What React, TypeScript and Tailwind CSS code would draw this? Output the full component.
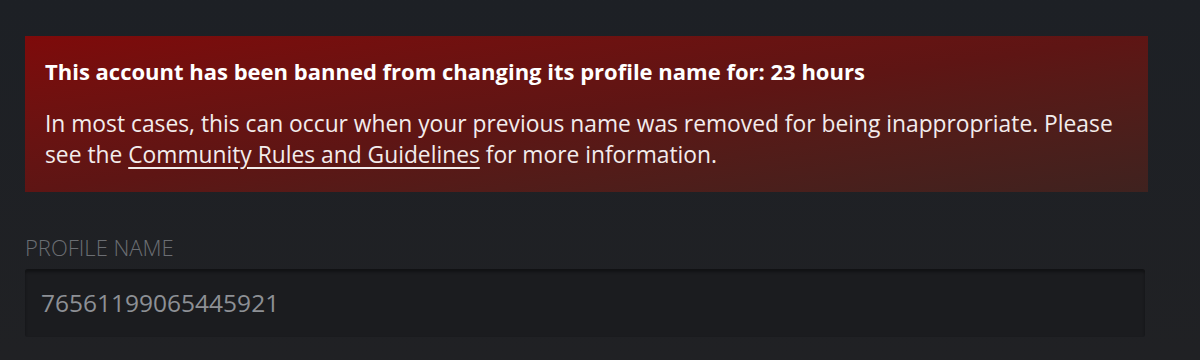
export default function App() {
  return (
    <div
      className="h-[360px] w-[1200px] overflow-hidden bg-gradient-to-b from-[#1d2025] to-[#202124] pl-[25px] pt-[36px]"
      style={{ fontFamily: '"Open Sans", "Noto Sans", sans-serif' }}
    >
      <div className="w-[1123px] bg-gradient-to-br from-[#7e0a0a] via-[#5e1514] to-[#3f221f] px-[20px] pb-[22px] pt-[20px] text-white">
        <p className="text-[22px] font-bold leading-[30px]">
          This account has been banned from changing its profile name for: 23 hours
        </p>
        <p className="mt-[22px] text-[22.8px] leading-[31px] text-[#f3ecec]">
          In most cases, this can occur when your previous name was removed for being inappropriate. Please see the{' '}
          <a href="#" className="underline underline-offset-[4px]">
            Community Rules and Guidelines
          </a>{' '}
          for more information.
        </p>
      </div>

      <div className="mt-[41px] w-[1120px]">
        <label className="block text-[22px] font-light uppercase leading-[28px] text-[#6b6e73]">
          Profile Name
        </label>
        <div className="mt-[8px] flex h-[68px] items-center rounded-[3px] border-t border-[#111214] bg-[#1b1c1f] px-[16px] shadow-[inset_0_2px_3px_rgba(0,0,0,0.35)]">
          <span className="text-[24.5px] text-[#8d9095]">76561199065445921</span>
        </div>
      </div>
    </div>
  );
}
